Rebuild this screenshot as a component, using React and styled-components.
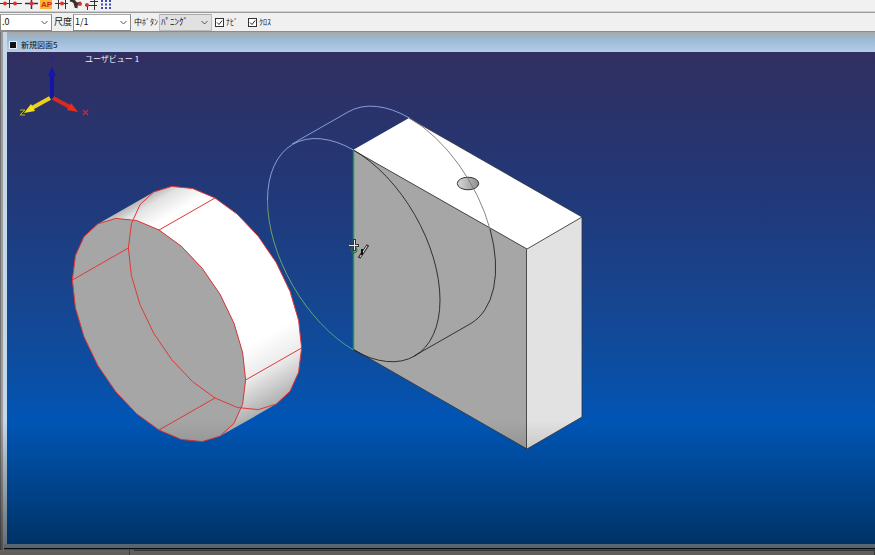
import React from "react";
import styled, { createGlobalStyle } from "styled-components";

const Global = createGlobalStyle`
  * { box-sizing: border-box; }
  body { margin: 0; background: #efefef; color: #111; font: 9px/14px "Noto Sans CJK JP", "Liberation Sans", sans-serif; }
`;

const Page = styled.div`
  position: relative;
  display: flex;
  flex-direction: column;
  height: 100vh;
  overflow: hidden;
`;

const IconBar = styled.div`
  height: 12px;
  flex: none;
  border-bottom: 1px solid #cfcfcf;
  background: #f1f1f1;
  svg { display: block; }
`;

const OptionBar = styled.form`
  display: flex;
  align-items: center;
  flex: none;
  height: 20px;
  background: #f0f0f0;
  border-top: 1px solid #9a9a9a;
  border-bottom: 1px solid #8c8c8c;
`;

const Caption = styled.label`
  display: flex;
  align-items: center;
  white-space: nowrap;
  gap: 2px;
  padding: 0 1px 0 ${(p) => (p.$small ? 3 : 2)}px;
  margin-right: ${(p) => p.$after || 0}px;
  font-size: ${(p) => (p.$small ? 8 : 9)}px;
`;

const SelectBox = styled.span`
  display: flex;
  align-items: center;
  position: relative;
  flex: none;
  width: ${(p) => p.$width}px;
  height: 17px;
  background: ${(p) => (p.$muted ? "#e1e1e1" : "#fff")};
  border: 1px solid ${(p) => (p.$muted ? "#bdbdbd" : "#8a8a8a")};
  border-top-color: #aaa;
  svg { position: absolute; right: 3px; pointer-events: none; }
`;

const Select = styled.select`
  appearance: none;
  width: 100%;
  height: 15px;
  padding: 0 1px;
  border: 0;
  background: transparent;
  color: #111;
  font: inherit;
`;

const Tick = styled.input`
  appearance: none;
  width: 9px;
  height: 9px;
  margin: 0;
  border: 1px solid #333;
  background: #fff url("data:image/svg+xml,%3Csvg xmlns='http://www.w3.org/2000/svg' viewBox='0 0 7 7'%3E%3Cpath d='M1 3.5 3 5.5 6.2 1.5' fill='none' stroke='%23222'/%3E%3C/svg%3E");
`;

const DocWindow = styled.main`
  display: flex;
  flex-direction: column;
  flex: 1;
  min-height: 0;
  padding-left: 7px;
  background: linear-gradient(90deg, #6f7377 0 1px, #a09a98 1px 3px, #c3d9ea 3px 7px, transparent 7px),
    linear-gradient(#a8a8a8, #9db4c8 5px, #9cbbd8 8px, #b4cce9 20px);
`;

const TitleBar = styled.header`
  display: flex;
  align-items: center;
  gap: 4px;
  flex: none;
  height: 20px;
  padding: 5px 2px 0;
  font-size: 8px;
`;

const Viewport = styled.section`
  position: relative;
  flex: 1;
  min-height: 0;
  background: linear-gradient(#322f61 0, #2b3268 10%, #21397a 30%, #17458f 50%, #0a4fa5 66%, #0055b5 75%, #0060c4 100%);
`;

const Model = styled.svg`
  display: block;
  width: 100%;
  height: 100%;
`;

const ViewName = styled.h1`
  position: absolute;
  left: 78px;
  top: 0;
  margin: 0;
  color: #f2f2f8;
  font-size: 8px;
  line-height: 14px;
  font-weight: 400;
`;

const FrameBottom = styled.div`
  height: 6px;
  flex: none;
  margin-left: -3px;
  background: linear-gradient(#a7c5dc 0 4px, #101418 4px 5px, #8d9a9a 5px);
`;

const StatusBar = styled.footer`
  display: flex;
  flex: none;
  height: 5px;
  background: #c6c3c0;
`;

const StatusPane = styled.div`
  flex: ${(p) => (p.$fixed ? "0 0 130px" : "1")};
  border-right: 1px solid #777;
  border-top: ${(p) => (p.$fixed ? "0" : "1px solid #666")};
  margin-left: ${(p) => (p.$fixed ? 0 : 4)}px;
`;

const Shade = styled.div`
  position: absolute;
  inset: auto 0 0;
  height: 135px;
  pointer-events: none;
  background: linear-gradient(rgba(0, 0, 0, 0), rgba(0, 0, 0, 0.52));
`;

const Chevron = () => (
  <svg width="7" height="5" viewBox="0 0 7 5" aria-hidden="true">
    <path d="M0.5 1 3.5 4 6.5 1" fill="none" stroke="#555" />
  </svg>
);

const STEP = 15;

const point = (cx, cy, deg) => {
  const t = (deg * Math.PI) / 180;
  return [cx + 86.6 * Math.cos(t), cy + 50 * Math.cos(t) + 100 * Math.sin(t)];
};

const arc = (cx, cy, from, to) => {
  const pts = [];
  for (let d = from; d <= to; d += STEP) pts.push(point(cx, cy, d).map((n) => n.toFixed(1)).join(","));
  return pts;
};

const FRONT = [159, 330];
const BACK = [215, 298];

function Disc() {
  const side = [...arc(...BACK, 225, 405), ...arc(...FRONT, 225, 405).reverse()].join(" ");
  const front = arc(...FRONT, 0, 360 - STEP).join(" ");
  const back = arc(...BACK, 0, 360 - STEP).join(" ");
  return (
    <g strokeWidth="1">
      <polygon points={side} fill="url(#rim)" />
      <polygon points={front} fill="#a6a6a6" />
      <g fill="none" stroke="#e03838">
        <polygon points={front} />
        <polygon points={back} />
        {[0, 90, 180, 270].map((d) => {
          const [x1, y1] = point(...FRONT, d);
          const [x2, y2] = point(...BACK, d);
          return <line key={d} x1={x1} y1={y1} x2={x2} y2={y2} />;
        })}
      </g>
    </g>
  );
}

function Block() {
  return (
    <g>
      <path d="M353 150 409 118 582 217 527 249Z" fill="#fff" />
      <path d="M353 150 527 249V449L353 349Z" fill="#a6a6a6" />
      <path d="M527 249 582 217V417L527 449Z" fill="#e2e2e2" />
      <path d="M409 118 582 217V417L527 449 353 349M353 150 527 249 582 217M526.5 249V449" fill="none" stroke="#333" strokeWidth="0.8" />
      <ellipse cx="468" cy="183.500" rx="10.700" ry="6.300" fill="url(#hole)" stroke="#333" />
    </g>
  );
}

function WireCylinder() {
  return (
    <g fill="none" strokeWidth="0.9">
      <path d="M353.500 150A122.500 70.700 60 0 0 267.500 200" stroke="#93a9e4" />
      <path d="M267.500 200A122.500 70.700 60 0 0 353.500 350" stroke="url(#wire)" />
      <path d="M353.500 150A122.500 70.700 60 0 1 440 300A122.500 70.700 60 0 1 353.500 350" stroke="#222" />
      <path d="M292 144 348 112A122.500 70.700 60 0 1 409.500 118" stroke="#93a9e4" />
      <path d="M409.500 118A122.500 70.700 60 0 1 490 229" stroke="#777" />
      <path d="M490 229A122.500 70.700 60 0 1 470 324L414 356" stroke="#222" />
      <path d="M353.500 150V349" stroke="#159653" strokeWidth="1.500" />
    </g>
  );
}

function Axes() {
  return (
    <g>
      <path d="M52 98V74" stroke="#1414a8" strokeWidth="4" />
      <path d="M48 76 52 67 56 76Z" fill="#1515b4" />
      <path d="M53 98 70 107" stroke="#d92a22" strokeWidth="4" />
      <path d="M78 112 67 110 71 103Z" fill="#e82c20" />
      <path d="M50 98 32 108" stroke="#ead21c" strokeWidth="4" />
      <path d="M24 113 31 104 35 111Z" fill="#f5e020" />
      <path d="M20 110H25L20 115H25" fill="none" stroke="#b7b32b" />
      <path d="M83 110 88 115M88 110 83 115" fill="none" stroke="#c22a40" strokeWidth="1.300" />
      <path d="M52 59V62M50 56 52 59 54 56" fill="none" stroke="#2525a0" />
    </g>
  );
}

function Cursor() {
  return (
    <g fill="none">
      <circle cx="354" cy="250" r="3" stroke="#2a6a3a" />
      <path d="M354.500 239V251M350 245.500H359" stroke="#333" strokeWidth="3" />
      <path d="M354.500 240V250M349 245.500H358" stroke="#eee" />
      <path d="M359 258 368 245" stroke="#333" strokeWidth="3" />
      <path d="M360 257 367 246" stroke="#eee" />
      <path d="M362 249V255" stroke="#111" strokeWidth="2" />
    </g>
  );
}

export default function App() {
  return (
    <>
      <Global />
      <Page>
        <IconBar>
          <svg width="120" height="11" viewBox="0 0 120 11" role="img" aria-label="スナップ">
            <g fill="none" stroke="#3a3030">
              <path d="M0 3.500H22M9.500 0V8M25 3.500H38M31.500 0V9M55 3.500H68M58.500 0V9M65.500 0V9M85 5.500H97M87.500 5V10M94.500 0V10M90 1.500H98" />
              <path d="M31.500 0V9M25 3.500H38" strokeWidth="1.500" />
              <path d="M70 0Q77 1 76 8M74 5 81 3" strokeWidth="3" />
            </g>
            <rect x="40" y="0" width="12" height="9" fill="#f9b233" />
            <text x="41" y="7" fontSize="8" fontWeight="700" fontFamily="Liberation Sans" fill="#c72a12">AP</text>
            <g fill="#d23636">
              <circle cx="5" cy="3.500" r="2" /><circle cx="15" cy="3.500" r="2" />
              <circle cx="31.500" cy="3.500" r="2" /><circle cx="62" cy="3.500" r="2" />
              <circle cx="80" cy="4" r="2" /><circle cx="87" cy="5" r="2" />
            </g>
            <path d="M101 1H112M101 4.500H112M101 8H112" stroke="#3b4bb5" strokeWidth="2" strokeDasharray="2 2" />
          </svg>
        </IconBar>
        <OptionBar>
          <SelectBox $width={52}>
            <Select aria-label="角度" defaultValue=".0"><option>.0</option></Select>
            <Chevron />
          </SelectBox>
          <Caption htmlFor="scale">尺度</Caption>
          <SelectBox $width={58}>
            <Select id="scale"><option>1/1</option></Select>
            <Chevron />
          </SelectBox>
          <Caption htmlFor="middle" $small>中ﾎﾞﾀﾝ</Caption>
          <SelectBox $width={53} $muted>
            <Select id="middle"><option>ﾊﾟﾆﾝｸﾞ</option></Select>
            <Chevron />
          </SelectBox>
          <Caption $after={6} $small><Tick type="checkbox" defaultChecked />ﾅﾋﾞ</Caption>
          <Caption $small><Tick type="checkbox" defaultChecked />ｸﾛｽ</Caption>
        </OptionBar>
        <DocWindow>
          <TitleBar>
            <svg width="8" height="8" viewBox="0 0 8 8" aria-hidden="true">
              <path d="M0 0H8V8H0Z" fill="#e8eef2" /><path d="M1 1H7V7H1Z" fill="#111" />
            </svg>
            新規図面5
          </TitleBar>
          <Viewport>
            <Model viewBox="7 52 868 492" preserveAspectRatio="xMinYMin meet" role="img" aria-label="3D モデル">
              <defs>
                <linearGradient id="rim" gradientUnits="userSpaceOnUse" x1="97" y1="224" x2="219" y2="436">
                  <stop offset="0" stopColor="#b5b5b5" />
                  <stop offset="0.04" stopColor="#e2e2e2" />
                  <stop offset="0.12" stopColor="#fff" />
                  <stop offset="0.74" stopColor="#fff" />
                  <stop offset="0.86" stopColor="#ebebeb" />
                  <stop offset="1" stopColor="#b0b0b0" />
                </linearGradient>
                <linearGradient id="hole">
                  <stop offset="0" stopColor="#d8d8d8" />
                  <stop offset="1" stopColor="#8f8f8f" />
                </linearGradient>
                <linearGradient id="wire" x1="0" y1="0" x2="0" y2="1">
                  <stop offset="0" stopColor="#7fa35a" />
                  <stop offset="0.6" stopColor="#6fb566" />
                  <stop offset="1" stopColor="#3fae9a" />
                </linearGradient>
              </defs>
              <Disc />
              <Block />
              <WireCylinder />
              <Axes />
              <Cursor />
            </Model>
            <ViewName>ユーザビュー 1</ViewName>
          </Viewport>
          <FrameBottom />
        </DocWindow>
        <StatusBar>
          <StatusPane $fixed />
          <StatusPane />
        </StatusBar>
        <Shade />
      </Page>
    </>
  );
}
